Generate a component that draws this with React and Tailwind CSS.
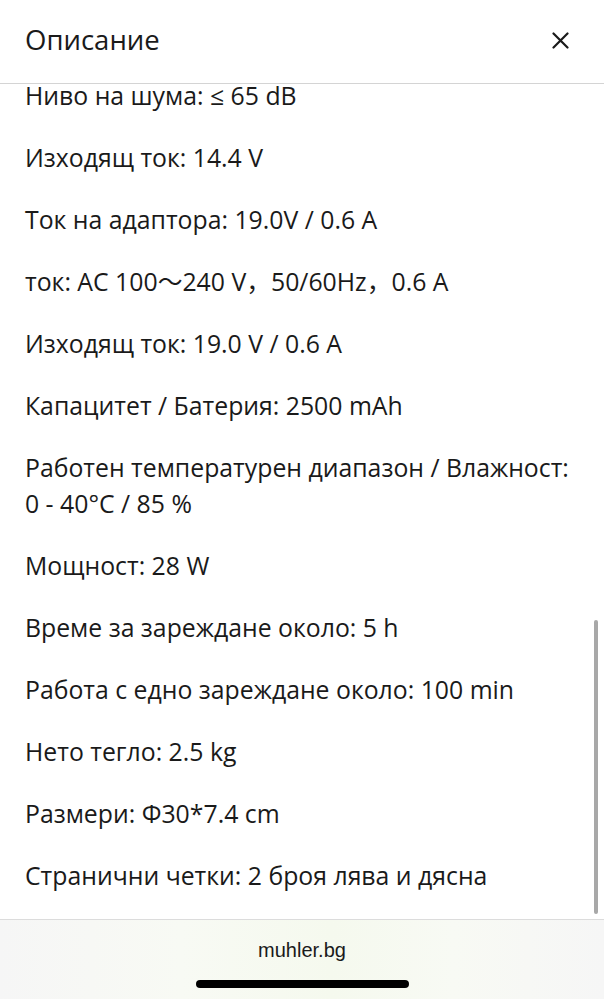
import React from "react";

const specs = [
  "Ниво на шума: ≤ 65 dB",
  "Изходящ ток: 14.4 V",
  "Ток на адаптора: 19.0V / 0.6 A",
  "ток: AC 100～240 V，50/60Hz，0.6 A",
  "Изходящ ток: 19.0 V / 0.6 A",
  "Капацитет / Батерия: 2500 mAh",
  "Работен температурен диапазон / Влажност: 0 - 40°C / 85 %",
  "Мощност: 28 W",
  "Време за зареждане около: 5 h",
  "Работа с едно зареждане около: 100 min",
  "Нето тегло: 2.5 kg",
  "Размери: Φ30*7.4 cm",
  "Странични четки: 2 броя лява и дясна",
];

const App = () => (
  <div className="w-[604px] h-[999px] flex flex-col bg-white text-[#1a1a1a] overflow-hidden" style={{ fontFamily: '"Open Sans", "Noto Sans CJK SC", sans-serif' }}>
    <div className="h-[84px] shrink-0 flex items-center justify-between pl-[25px] pr-[35px] border-b border-[#d4d4d4]">
      <h1 className="text-[27.5px] font-normal leading-none -mt-[4px]">Описание</h1>
      <svg width="17" height="17" viewBox="0 0 17 17" className="-mt-[3px]">
        <path d="M1.5 1.5 L15.5 15.5 M15.5 1.5 L1.5 15.5" stroke="#1a1a1a" strokeWidth="2.2" strokeLinecap="round" />
      </svg>
    </div>

    <div className="relative flex-1 overflow-hidden">
      <div className="flex flex-col gap-[26px] pl-[25px] pr-[28px] -mt-[7px]">
        {specs.map((s) => (
          <p key={s} className="text-[24.8px] leading-[36px]">{s}</p>
        ))}
      </div>
      <div className="absolute right-[6px] top-[536px] w-[4px] h-[294px] rounded-full bg-[#a8a8a8]" />
    </div>

    <div className="h-[80px] shrink-0 flex flex-col items-center border-t border-[#dcdcdc] bg-[linear-gradient(90deg,#f6f6f6_0%,#f8faf4_30%,#f5f9ee_55%,#f8faf4_75%,#f6f6f6_100%)]">
      <p className="text-[20px] leading-none mt-[20px]" style={{ fontFamily: '"Liberation Sans", Arial, sans-serif' }}>muhler.bg</p>
      <div className="mt-[20px] w-[213px] h-[8px] rounded-full bg-black" />
    </div>
  </div>
);

export default App;
